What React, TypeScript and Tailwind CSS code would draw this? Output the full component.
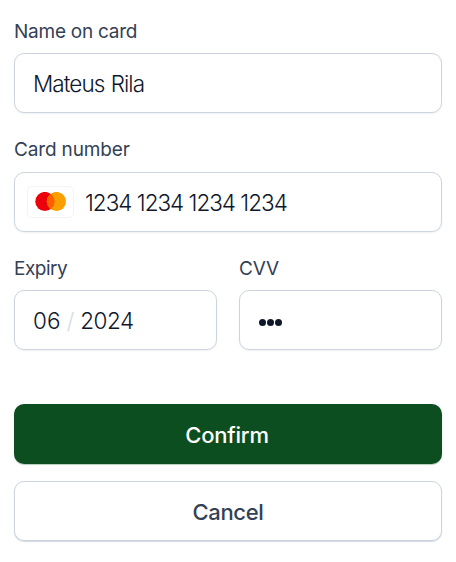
import React from "react";

const field =
  "flex h-[60px] items-center rounded-[10px] border border-[#ccd5df] bg-white text-[22.5px] font-light leading-[30px] text-[#0f172a] shadow-[0_1px_2px_rgba(15,23,42,0.06)]";
const label = "block h-6 whitespace-nowrap text-[19px] leading-6 text-[#334155]";

function Mastercard() {
  return (
    <svg className="h-[20px] w-[32px]" viewBox="0 0 32 20">
      <circle cx="9.9" cy="9.5" r="9.6" fill="#eb000b" />
      <circle cx="21.4" cy="9.5" r="9.6" fill="#fa9f00" />
      <path d="M15.65 1.8a9.6 9.6 0 0 1 0 15.4a9.6 9.6 0 0 1 0-15.4Z" fill="#ff5f00" />
    </svg>
  );
}

export default function App() {
  return (
    <main className="h-[562px] w-[456px] bg-white px-[14px] pt-5 font-['Inter','Liberation_Sans',sans-serif]">
      <label className={label}>
        <span className="tracking-[-0.25px]">Name on card</span>
      </label>
      <div className={`${field} mt-[9px] pl-[18px] pt-0.5`}>
        <span className="tracking-[-0.95px] [word-spacing:1px]">Mateus Rila</span>
      </div>

      <label className={`${label} mt-[25px]`}>
        <span className="tracking-[-0.15px]">Card number</span>
      </label>
      <div className={`${field} mt-[10px] pl-[12px]`}>
        <span className="flex h-8 w-[47px] items-center justify-center rounded-[5px] border border-[#f3f4f7]">
          <Mastercard />
        </span>
        <span className="ml-[11px] mt-px tracking-[-1px]">1234 1234 1234 1234</span>
      </div>

      <div className="mt-[25px] grid grid-cols-2 gap-[22px]">
        <div>
          <label className={label}>
            <span className="tracking-[-0.5px]">Expiry</span>
          </label>
          <div className={`${field} mt-[9px] pl-[18px] pt-0.5`}>
            <span>06</span>
            <span className="mx-[6px] text-[#d5dde7]">/</span>
            <span className="tracking-[-0.5px]">2024</span>
          </div>
        </div>
        <div>
          <label className={label}>
            <span className="tracking-[-0.1px]">CVV</span>
          </label>
          <div className={`${field} mt-[9px] gap-[0.8px] pl-[18.8px] pt-[5px]`}>
            <span className="size-[7.2px] rounded-full bg-[#0f172a]" />
            <span className="size-[7.2px] rounded-full bg-[#0f172a]" />
            <span className="size-[7.2px] rounded-full bg-[#0f172a]" />
          </div>
        </div>
      </div>

      <button className="mt-[54px] flex h-[60px] w-full items-center justify-center rounded-[10px] bg-[#0c4e20] pr-0.5 pt-0.5 text-[22px] font-medium leading-[30px] text-white shadow-[0_1px_1px_rgba(12,78,32,0.3)]">
        <span className="tracking-[-0.2px]">Confirm</span>
      </button>
      <button className="mt-[17px] flex h-[60px] w-full items-center justify-center rounded-[10px] border border-[#ccd5df] bg-white pt-0.5 text-[22px] font-medium leading-[30px] text-[#334155] shadow-[0_1px_1px_rgba(148,163,184,0.4)]">
        <span className="tracking-[-0.3px]">Cancel</span>
      </button>
    </main>
  );
}
